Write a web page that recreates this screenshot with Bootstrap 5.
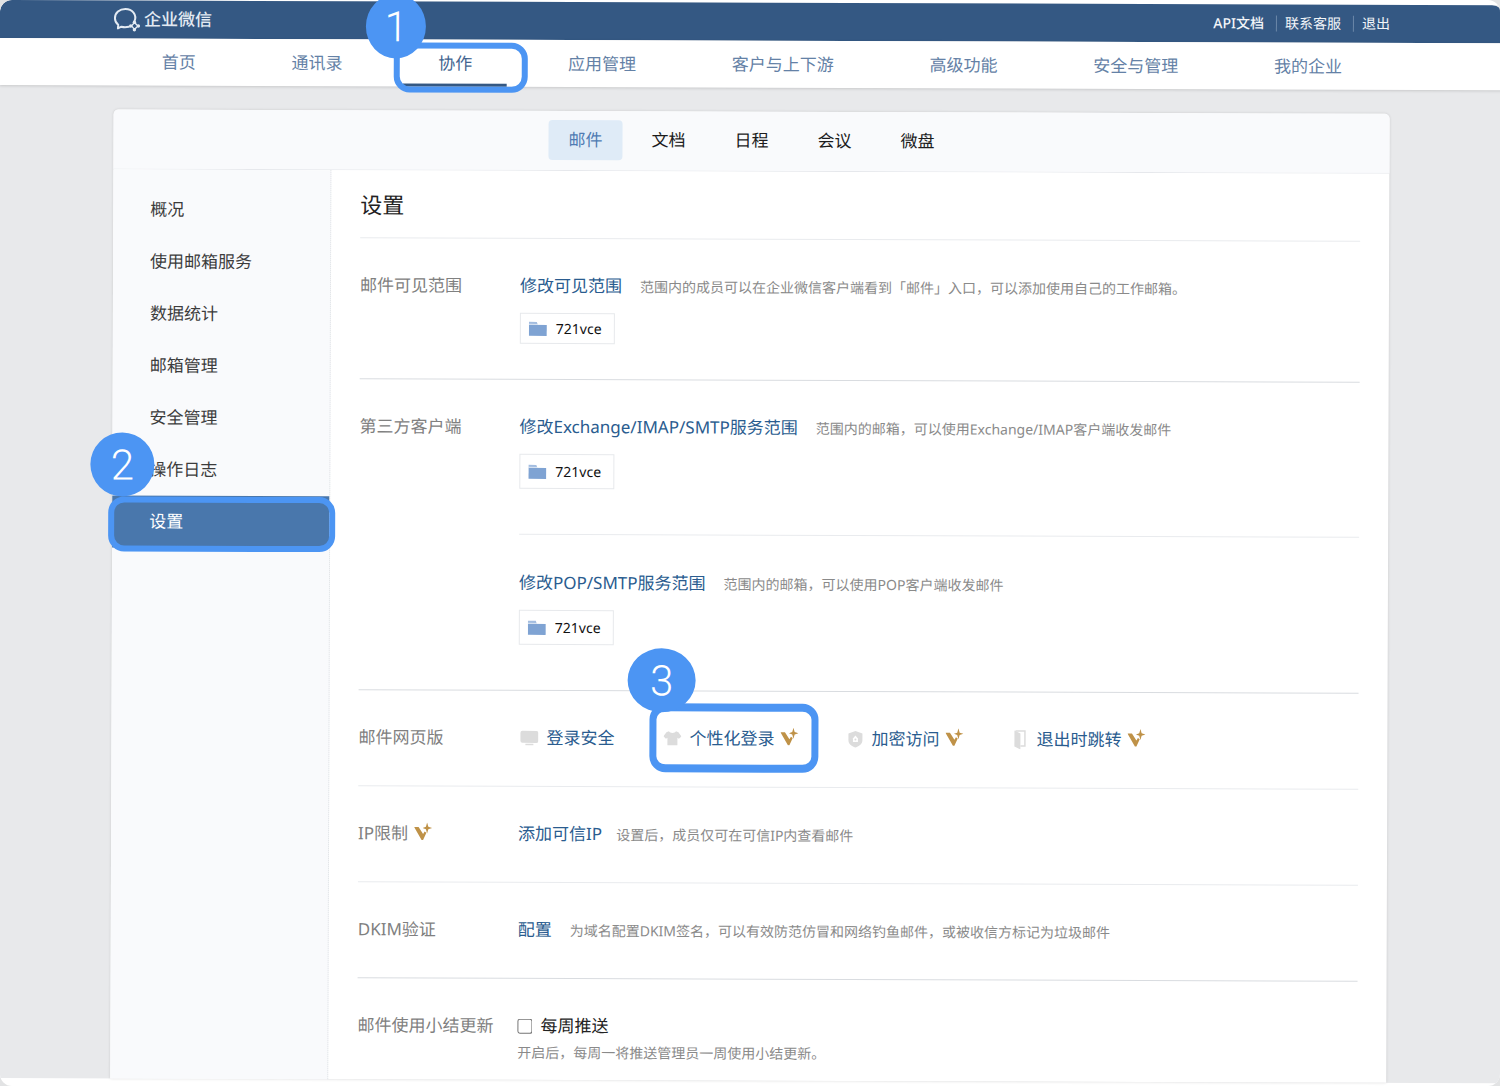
<!DOCTYPE html>
<html lang="zh-CN">
<head>
<meta charset="utf-8">
<meta name="viewport" content="width=device-width, initial-scale=1">
<title>企业微信 - 邮件设置</title>
<link href="https://cdn.jsdelivr.net/npm/bootstrap@5.3.0/dist/css/bootstrap.min.css" rel="stylesheet">
<style>
  :root { --mark: #4c95f3; --line: #e6e8ec; --link: #2a5c8f; }
  body { background: #e2e3e4; font-family: "Noto Sans", "Noto Sans CJK SC", sans-serif; font-size: 17px; line-height: 26px; color: #222; }
  a { text-decoration: none; }
  .sheet { background: #fff; border-radius: 12px; min-height: 100vh; }
  /* the console is shown slightly tilted on its sheet */
  .console { background: #e8e9eb; margin-right: -4px; transform: rotate(.2deg); transform-origin: 0 0; }
  .gutter { padding-left: 114px; padding-right: 114px; }

  .topbar { background: #345883; height: 38px; border-radius: 12px 12px 0 0; }
  .brand { color: #e3eaf2; font-weight: 500; }
  .toplinks { font-size: 14px; line-height: 16px; }
  .toplinks a { color: #f2f5f9; }
  .toplinks a + a { border-left: 1px solid #6b87a8; }

  .mainnav { background: #fff; height: 47px; box-shadow: 0 1px 3px rgba(0,0,0,.14); }
  .mainnav .nav-link { color: #6481a6; padding: 11px 0 10px; position: relative; }
  .mainnav .nav-link.active { color: #42648f; }
  .mainnav .nav-link.active::after { content: ""; display: block; position: absolute; left: 50%; bottom: 0; width: 104px; margin-left: -52px; height: 3px; background: #345883; }

  .panel { background: #fff; border-radius: 5px 5px 0 0; box-shadow: 0 0 3px rgba(0,0,0,.14); }
  .panel-top { background: #f9fafc; height: 60px; padding-bottom: 2px; border-bottom: 1px solid var(--line); border-radius: 5px 5px 0 0; gap: 9px; }
  .panel-top .nav-link { color: #1c1c1c; padding: 7px 20px; border-radius: 4px; }
  .panel-top .nav-link.active { background: #dfebf7; color: #4f7bb3; }

  .side { width: 218px; background: #f9fafc; border-right: 1px dotted #dcdfe3; padding-top: 14px; }
  .side .nav-link { color: #3c3c3c; padding: 13px 37px; }
  .side .nav-link.active { background: #4977ac; color: #fff; }

  .content { padding: 0 29px 15px; min-width: 0; }
  .title-line { font-size: 22px; font-weight: 400; line-height: 26px; padding: 21px 0 20px; margin: 0; border-bottom: 1px solid #e9ebee; }
  .setting { padding: 34px 0 35px; border-bottom: 1px solid #e9ebee; }
  .setting.ends-group { border-bottom-color: #d9dce0; }
  .setting:last-child { border: 0; padding-bottom: 0; }
  .caption-col { width: 160px; color: #808080; }
  .field a { color: var(--link); }
  .hint { font-size: 14px; line-height: 28px; margin-bottom: -2px; color: #8a8a8a; }
  .gap-hint { column-gap: 18px; }
  .gap-hint-narrow { column-gap: 14px; }
  .dept { border: 1px solid #e7e9ec; height: 35px; margin-top: 14px; padding: 0 12px 0 8px; font-size: 14px; color: #111; gap: 9px; }
  .dept-low { height: 31px; }
  .subfield { padding-top: 35px; border-top: 1px solid #e9ebee; margin-top: 45px; }
  .tall-end { padding-bottom: 45px; }
  .entries { column-gap: 49px; }
  .entry { gap: 8px; }
  .vip-mark { width: 18px; height: 18px; margin: 0 0 4px -2px; }

  .weekly { width: 15px; height: 15px; }

  .spot { position: absolute; border: 6px solid var(--mark); border-radius: 16px; z-index: 2; pointer-events: none; }
  .bubble { position: absolute; background: var(--mark); color: #fff; border-radius: 50%; width: 64px; height: 64px; font: 300 42px/66px Roboto, sans-serif; text-align: center; z-index: 3; }
  .spot-nav { width: 134px; height: 50px; left: 50%; margin-left: -61px; top: 3px; }
  .bubble-nav { width: 60px; left: 50%; margin-left: -89px; top: -45px; }
  .spot-side { inset: 1px -6px -4px -4px; }
  .bubble-side { left: -22px; top: -63px; }
  .spot-entry { inset: -22px -20px -21px -14px; border-width: 8px 7px; }
  .bubble-entry { width: 68px; left: -36px; top: -77px; }
</style>
</head>
<body>
<svg width="0" height="0" class="position-absolute" aria-hidden="true">
  <symbol id="vip" viewBox="0 0 18 18"><path fill="#bf9248" d="M0 4.500h4.500l4.500 7 1.500-2.500 1.800 1.200L9 17.500H7.500zM13 0l1.200 4.300L18 5.500l-3.800 1.200L13 11l-1.200-4.300L8.500 5.500l3.300-1.200z"/></symbol>
  <symbol id="folder" viewBox="0 0 18 16"><path fill="#a3bde0" d="M0 1h8l1 3H0z"/><path fill="#7fa3d3" d="M0 4h18v11H0z"/><path stroke="#fff" stroke-opacity=".6" d="M0 3.500h9"/></symbol>
</svg>
<div class="sheet overflow-hidden">
<div class="console">
  <header class="topbar gutter d-flex justify-content-between align-items-center">
    <a href="#" class="brand d-flex align-items-center">
      <svg width="30" height="26" viewBox="0 0 30 26" fill="none" stroke="#e3eaf2" stroke-linejoin="round" stroke-linecap="round" aria-hidden="true"><path stroke-width="2" d="M20.500 15C23.500 8 18 2.500 11.500 2.500 5.500 2.500 1 6.500 1 11.800c0 2.800 1.300 5 3.300 6.500L4 22l3.500-1.700c2.500.7 5 .6 7.500 0"/><path stroke-width="1.300" d="M20.500 16l-2.800 3.500 2.800 3.500 3.500-3.500z"/><g fill="#e3eaf2" stroke="none"><circle cx="20.500" cy="15.800" r="1.700"/><circle cx="16.800" cy="19.500" r="1.700"/><circle cx="20.500" cy="23.300" r="1.700"/><circle cx="24.500" cy="19.500" r="1.700"/></g></svg>
      <span>企业微信</span>
    </a>
    <div class="toplinks d-flex">
      <a href="#" class="pe-2 fw-medium">API文档</a><a href="#" class="ps-2 pe-2 me-1 ms-1">联系客服</a><a href="#" class="ps-2">退出</a>
    </div>
  </header>
  <nav class="mainnav gutter position-relative" aria-label="主导航">
    <ul class="nav flex-nowrap text-center text-nowrap">
      <li class="nav-item flex-fill"><a class="nav-link" href="#">首页</a></li>
      <li class="nav-item flex-fill"><a class="nav-link" href="#">通讯录</a></li>
      <li class="nav-item flex-fill position-relative"><a class="nav-link active" href="#" aria-current="page">协作</a><span class="spot spot-nav"></span><span class="bubble bubble-nav">1</span></li>
      <li class="nav-item flex-fill"><a class="nav-link" href="#">应用管理</a></li>
      <li class="nav-item flex-fill"><a class="nav-link" href="#">客户与上下游</a></li>
      <li class="nav-item flex-fill"><a class="nav-link" href="#">高级功能</a></li>
      <li class="nav-item flex-fill"><a class="nav-link" href="#">安全与管理</a></li>
      <li class="nav-item flex-fill"><a class="nav-link" href="#">我的企业</a></li>
    </ul>
  </nav>
  <div class="gutter pt-4">
    <div class="panel">
      <nav class="panel-top nav justify-content-center align-items-center" aria-label="协作">
        <a class="nav-link active" href="#">邮件</a>
        <a class="nav-link" href="#">文档</a>
        <a class="nav-link" href="#">日程</a>
        <a class="nav-link" href="#">会议</a>
        <a class="nav-link" href="#">微盘</a>
      </nav>
      <div class="d-flex">
        <aside class="side flex-shrink-0">
          <nav class="nav flex-column" aria-label="邮件">
            <a class="nav-link" href="#">概况</a>
            <a class="nav-link" href="#">使用邮箱服务</a>
            <a class="nav-link" href="#">数据统计</a>
            <a class="nav-link" href="#">邮箱管理</a>
            <a class="nav-link" href="#">安全管理</a>
            <a class="nav-link" href="#">操作日志</a>
            <div class="position-relative"><a class="nav-link active" href="#" aria-current="page">设置</a><span class="spot spot-side"></span><span class="bubble bubble-side">2</span></div>
          </nav>
        </aside>
        <main class="content flex-grow-1">
          <h1 class="title-line">设置</h1>

          <section class="setting ends-group d-flex">
            <div class="caption-col flex-shrink-0">邮件可见范围</div>
            <div class="field flex-grow-1">
              <div class="d-flex flex-wrap gap-hint"><a href="#">修改可见范围</a><span class="hint">范围内的成员可以在企业微信客户端看到「邮件」入口，可以添加使用自己的工作邮箱。</span></div>
              <div class="dept dept-low d-inline-flex align-items-center"><svg width="18" height="16" aria-hidden="true"><use href="#folder"/></svg>721vce</div>
            </div>
          </section>

          <section class="setting tall-end ends-group d-flex">
            <div class="caption-col flex-shrink-0">第三方客户端</div>
            <div class="field flex-grow-1">
              <div class="d-flex flex-wrap gap-hint"><a href="#">修改Exchange/IMAP/SMTP服务范围</a><span class="hint">范围内的邮箱，可以使用Exchange/IMAP客户端收发邮件</span></div>
              <div class="dept d-inline-flex align-items-center"><svg width="18" height="16" aria-hidden="true"><use href="#folder"/></svg>721vce</div>
              <div class="subfield">
                <div class="d-flex flex-wrap gap-hint"><a href="#">修改POP/SMTP服务范围</a><span class="hint">范围内的邮箱，可以使用POP客户端收发邮件</span></div>
                <div class="dept d-inline-flex align-items-center"><svg width="18" height="16" aria-hidden="true"><use href="#folder"/></svg>721vce</div>
              </div>
            </div>
          </section>

          <section class="setting d-flex">
            <div class="caption-col flex-shrink-0">邮件网页版</div>
            <div class="field flex-grow-1 d-flex flex-wrap entries">
              <a href="#" class="entry d-flex align-items-center"><svg width="20" height="16" viewBox="0 0 20 16" fill="#dcdcdc" aria-hidden="true"><rect x="2" y="1" width="18" height="12" rx="2"/><path d="M7 14h8v1.500H7z"/></svg>登录安全</a>
              <a href="#" class="entry d-flex align-items-center position-relative"><svg width="18" height="16" viewBox="0 0 18 16" fill="#dcdcdc" aria-hidden="true"><path d="M5.500 1c1 2.200 6 2.200 7 0L15 2l3 4-2.500 2.500-1.500-1V15H4V7.500l-1.500 1L0 6l3-4z"/></svg>个性化登录<svg class="vip-mark" aria-hidden="true"><use href="#vip"/></svg><span class="spot spot-entry"></span><span class="bubble bubble-entry">3</span></a>
              <a href="#" class="entry d-flex align-items-center"><svg width="16" height="18" viewBox="0 0 16 18" aria-hidden="true"><path fill="#dcdcdc" d="M8 1l7 2.500V10c0 4-3 6-7 7.500C4 16 1 14 1 10V3.500z"/><path fill="#fff" d="M8 5.500l2.500 3V12h-5V8.500z"/><circle cx="8" cy="9.500" r="1" fill="#dcdcdc"/></svg>加密访问<svg class="vip-mark" aria-hidden="true"><use href="#vip"/></svg></a>
              <a href="#" class="entry d-flex align-items-center"><svg width="16" height="20" viewBox="0 0 16 20" aria-hidden="true"><path fill="#dcdcdc" d="M2 1l6 3v16l-6-3z"/><path fill="none" stroke="#dcdcdc" stroke-width="1.500" d="M3 1.500h9.500v15H8"/></svg>退出时跳转<svg class="vip-mark" aria-hidden="true"><use href="#vip"/></svg></a>
            </div>
          </section>

          <section class="setting d-flex">
            <div class="caption-col flex-shrink-0 d-flex align-items-center entry">IP限制<svg class="vip-mark" aria-hidden="true"><use href="#vip"/></svg></div>
            <div class="field flex-grow-1 d-flex flex-wrap gap-hint-narrow"><a href="#">添加可信IP</a><span class="hint">设置后，成员仅可在可信IP内查看邮件</span></div>
          </section>

          <section class="setting ends-group d-flex">
            <div class="caption-col flex-shrink-0">DKIM验证</div>
            <div class="field flex-grow-1 d-flex flex-wrap gap-hint"><a href="#">配置</a><span class="hint">为域名配置DKIM签名，可以有效防范仿冒和网络钓鱼邮件，或被收信方标记为垃圾邮件</span></div>
          </section>

          <section class="setting d-flex">
            <div class="caption-col flex-shrink-0">邮件使用小结更新</div>
            <div class="field flex-grow-1">
              <div class="d-flex align-items-center"><input class="weekly m-0" type="checkbox" id="weekly"><label class="ps-2" for="weekly">每周推送</label></div>
              <div class="hint">开启后，每周一将推送管理员一周使用小结更新。</div>
            </div>
          </section>
        </main>
      </div>
    </div>
  </div>
</div>
</div>
<script src="https://cdn.jsdelivr.net/npm/bootstrap@5.3.0/dist/js/bootstrap.bundle.min.js"></script>
</body>
</html>
